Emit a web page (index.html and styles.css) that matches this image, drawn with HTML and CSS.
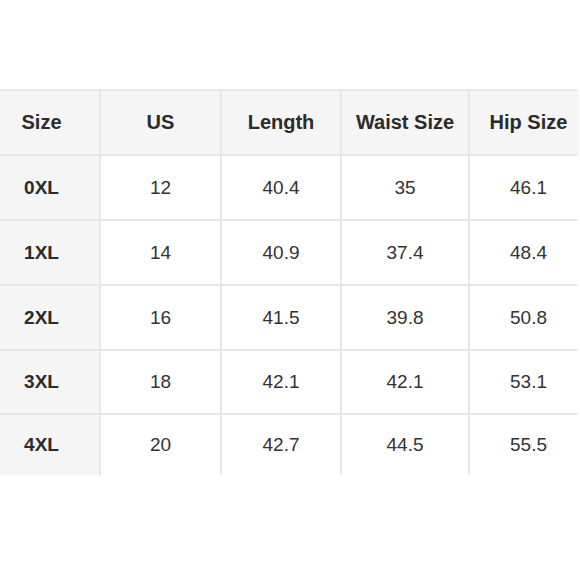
FILE: index.html
```html
<!DOCTYPE html>
<html>
<head>
<meta charset="utf-8">
<link rel="stylesheet" href="styles.css">
</head>
<body>
<div class="chart">
  <div class="cell head first">Size</div>
  <div class="cell head">US</div>
  <div class="cell head">Length</div>
  <div class="cell head">Waist Size</div>
  <div class="cell head last">Hip Size</div>

  <div class="cell label first">0XL</div>
  <div class="cell">12</div>
  <div class="cell">40.4</div>
  <div class="cell">35</div>
  <div class="cell last">46.1</div>

  <div class="cell label first">1XL</div>
  <div class="cell">14</div>
  <div class="cell">40.9</div>
  <div class="cell">37.4</div>
  <div class="cell last">48.4</div>

  <div class="cell label first">2XL</div>
  <div class="cell">16</div>
  <div class="cell">41.5</div>
  <div class="cell">39.8</div>
  <div class="cell last">50.8</div>

  <div class="cell label first">3XL</div>
  <div class="cell">18</div>
  <div class="cell">42.1</div>
  <div class="cell">42.1</div>
  <div class="cell last">53.1</div>

  <div class="cell label first">4XL</div>
  <div class="cell">20</div>
  <div class="cell">42.7</div>
  <div class="cell">44.5</div>
  <div class="cell last">55.5</div>
</div>
</body>
</html>
```
FILE: styles.css
```css
html, body {
  margin: 0;
  padding: 0;
  background: #ffffff;
}
body {
  width: 580px;
  height: 580px;
  overflow: hidden;
  padding-top: 89px;
  box-sizing: border-box;
  font-family: "Liberation Sans", Arial, sans-serif;
  color: #2b2b2b;
}
.chart {
  width: 577px;
  display: grid;
  grid-template-columns: 99px 119px 118px 126px 109px;
  grid-template-rows: 63px 63px 63px 63px 62px 60px;
  column-gap: 2px;
  row-gap: 2px;
  border-top: 2px solid #e7e7e7;
  background: #e7e7e7;
}
.cell {
  background: #ffffff;
  display: flex;
  align-items: center;
  justify-content: center;
  font-size: 19px;
  color: #333333;
  box-sizing: border-box;
}
.first {
  padding-right: 16px;
}
.last {
  padding-left: 8px;
}
.head {
  background: #f5f5f5;
  font-weight: bold;
  font-size: 20px;
  color: #2b2b2b;
}
.label {
  background: #f5f5f5;
  font-weight: bold;
  font-size: 19px;
  color: #2b2b2b;
}
```
